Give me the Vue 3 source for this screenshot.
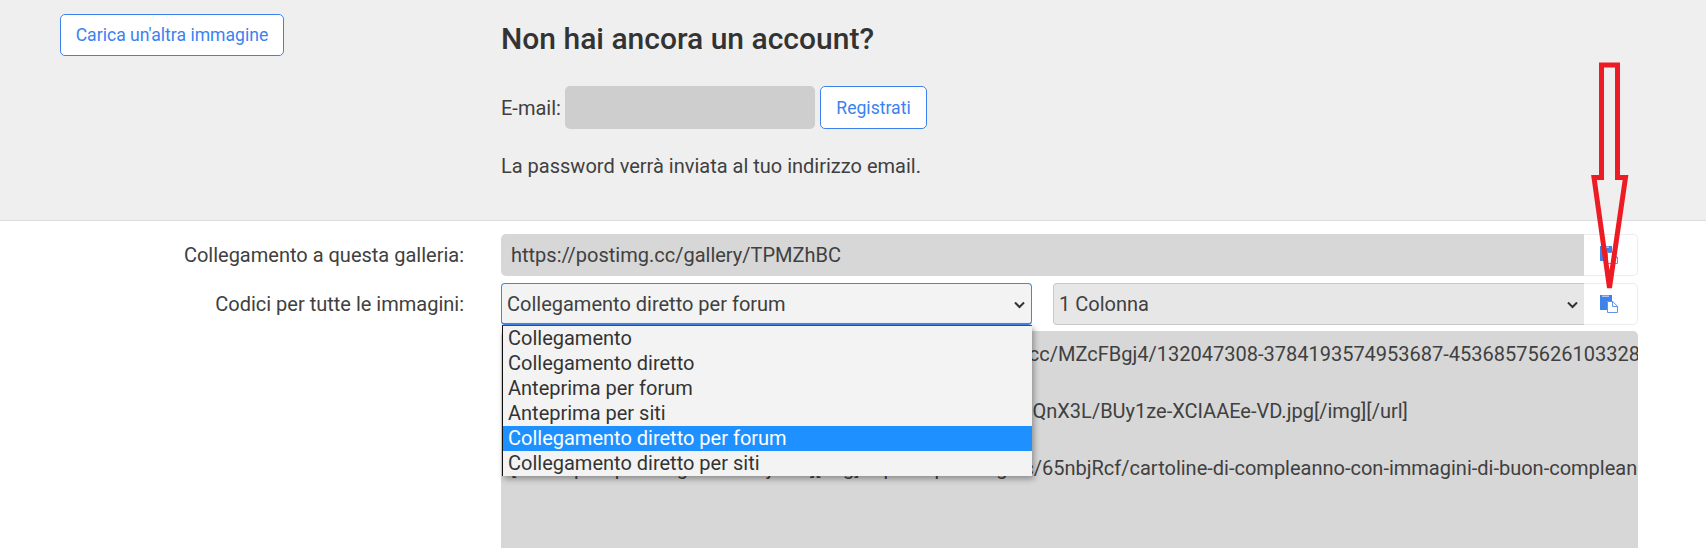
<template>
  <div class="page">
    <section class="top-panel">
      <div class="top-left">
        <button class="btn" type="button">Carica un'altra immagine</button>
      </div>
      <div class="signup">
        <h2>Non hai ancora un account?</h2>
        <form class="signup-row" @submit.prevent>
          <label for="email">E-mail:</label>
          <input id="email" class="email-input" type="text" />
          <button class="btn btn-small" type="button">Registrati</button>
        </form>
        <p>La password verrà inviata al tuo indirizzo email.</p>
      </div>
    </section>

    <section class="codes">
      <label class="row-label">Collegamento a questa galleria:</label>
      <div class="group">
        <input class="link-input" type="text" readonly value="https://postimg.cc/gallery/TPMZhBC" />
        <button class="copy-btn" type="button" aria-label="Copia">
          <svg width="18" height="18" viewBox="0 0 18 18">
            <path d="M0 0h12v6.5H7V15H0z" fill="#3f83ea" />
            <path d="M2 1.2h7" stroke="#dbe7fb" stroke-width="1" />
            <path d="M7.5 6.5h5.2l4.8 4.8v6.2H7.5z" fill="#fff" stroke="#5b95ee" />
            <path d="M12.5 6.5v5h5" fill="none" stroke="#5b95ee" />
          </svg>
        </button>
      </div>

      <label class="row-label">Codici per tutte le immagini:</label>
      <div class="group">
        <div class="select-box select-type">
          <span>{{ options[4] }}</span>
          <svg class="chevron" width="11" height="8" viewBox="0 0 11 8">
            <path d="M1 1.5l4.5 4.5 4.5-4.5" fill="none" stroke="#333" stroke-width="2" />
          </svg>
          <ul class="dropdown">
            <li v-for="(opt, i) in options" :key="opt" :class="{ selected: i === 4 }">{{ opt }}</li>
          </ul>
        </div>
        <div class="select-box select-cols">
          <span>1 Colonna</span>
          <svg class="chevron" width="11" height="8" viewBox="0 0 11 8">
            <path d="M1 1.5l4.5 4.5 4.5-4.5" fill="none" stroke="#333" stroke-width="2" />
          </svg>
        </div>
        <button class="copy-btn" type="button" aria-label="Copia">
          <svg width="18" height="18" viewBox="0 0 18 18">
            <path d="M0 0h12v6.5H7V15H0z" fill="#3f83ea" />
            <path d="M2 1.2h7" stroke="#dbe7fb" stroke-width="1" />
            <path d="M7.5 6.5h5.2l4.8 4.8v6.2H7.5z" fill="#fff" stroke="#5b95ee" />
            <path d="M12.5 6.5v5h5" fill="none" stroke="#5b95ee" />
          </svg>
        </button>
      </div>

      <div></div>
      <textarea class="code-area" wrap="off" readonly :value="code"></textarea>
    </section>

    <!-- hand drawn arrow on top of the screenshot -->
    <svg class="arrow" width="50" height="244" viewBox="0 0 50 244">
      <path
        d="M16.5 10h16v112.5h8L24.5 233 9 122.5h7.5z"
        fill="none"
        stroke="#ed1c24"
        stroke-width="5"
      />
    </svg>
  </div>
</template>

<script setup>
const options = [
  'Collegamento',
  'Collegamento diretto',
  'Anteprima per forum',
  'Anteprima per siti',
  'Collegamento diretto per forum',
  'Collegamento diretto per siti',
];

const code = [
  '[url=https://postimg.cc/iMZcFBgj4/][img]https://i.postimg.cc/MZcFBgj4/132047308-3784193574953687-4536857562610332830-n.jpg[/img][/url]',
  '',
  '[url=https://postimg.cc/QnX3L/][img]https://i.postimg.cc/cQnX3L/BUy1ze-XCIAAEe-VD.jpg[/img][/url]',
  '',
  '[url=https://postimg.cc/65nbjRcf/][img]https://i.postimg.cc/65nbjRcf/cartoline-di-compleanno-con-immagini-di-buon-compleanno.jpg[/img][/url]',
].join('\n');
</script>

<style>
html,
body {
  margin: 0;
  background: #fff;
}
</style>

<style scoped>
.page {
  position: relative;
  height: 548px;
  overflow: hidden;
  font-family: Roboto, "Liberation Sans", sans-serif;
  font-size: 20px;
  color: #404040;
}

.top-panel {
  display: grid;
  grid-template-columns: 501px 1fr;
  height: 220px;
  background: #efefef;
  border-bottom: 1px solid #dcdcdc;
}

.top-left {
  padding: 14px 0 0 60px;
}

.btn {
  height: 42px;
  width: 224px;
  padding: 0;
  font: inherit;
  font-size: 17.6px;
  color: #3b82f0;
  background: #fff;
  border: 1px solid #3b82f0;
  border-radius: 5px;
}

.btn-small {
  width: 107px;
  height: 43px;
}

.signup h2 {
  margin: 0;
  padding-top: 21px;
  font-size: 30px;
  line-height: 35px;
  font-weight: 500;
  color: #333;
}

.signup-row {
  display: flex;
  align-items: center;
  margin-top: 30px;
}

.signup-row label {
  width: 64px;
}

.email-input {
  width: 250px;
  height: 43px;
  box-sizing: border-box;
  margin-right: 5px;
  border: 0;
  border-radius: 5px;
  background: #cecece;
}

.signup p {
  margin: 26px 0 0;
  line-height: 22px;
}

.codes {
  display: grid;
  grid-template-columns: 464px 1137px;
  column-gap: 37px;
  row-gap: 7px;
  padding-top: 13px;
}

.row-label {
  height: 42px;
  line-height: 42px;
  text-align: right;
}

.group {
  display: flex;
  height: 42px;
}

.link-input {
  flex: 1;
  min-width: 0;
  box-sizing: border-box;
  padding: 0 10px;
  font: inherit;
  color: #404040;
  background: #d7d7d7;
  border: 0;
  border-radius: 5px 0 0 5px;
  outline: none;
}

.copy-btn {
  display: flex;
  align-items: center;
  justify-content: center;
  width: 54px;
  padding: 0 4px 0 0;
  background: #fff;
  border: 1px solid #ececec;
  border-left: 0;
  border-radius: 0 5px 5px 0;
}

.select-box {
  position: relative;
  box-sizing: border-box;
  display: flex;
  align-items: center;
  height: 42px;
  padding-left: 5px;
}

.chevron {
  position: absolute;
  right: 6px;
  top: 17px;
}

.select-type {
  width: 531px;
  margin-right: 21px;
  background: #f3f3f3;
  border: 1px solid #4285e8;
  border-bottom-width: 2px;
  border-radius: 4px;
}

.select-cols {
  flex: 1;
  background: #e7e7e7;
  border: 1px solid #c9c9c9;
  border-right: 0;
  border-radius: 4px 0 0 4px;
}

.dropdown {
  position: absolute;
  z-index: 2;
  left: 0;
  top: 41px;
  box-sizing: border-box;
  width: 530px;
  margin: 0;
  padding: 0;
  list-style: none;
  background: #f3f3f3;
  border-top: 1px solid #4a4a4a;
  border-left: 1px solid #111;
  box-shadow: 2px 3px 6px rgba(0, 0, 0, 0.35);
}

.dropdown li {
  height: 25px;
  padding-left: 5px;
  line-height: 25px;
  color: #333;
}

.dropdown li.selected {
  color: #fff;
  background: #1e90ff;
}

.code-area {
  display: block;
  box-sizing: border-box;
  width: 100%;
  height: 240px;
  margin-top: -1px;
  padding: 9px 10px;
  font: inherit;
  line-height: 28.5px;
  color: #404040;
  background: #d7d7d7;
  border: 0;
  border-radius: 5px;
  outline: none;
  resize: none;
  overflow: hidden;
}

.arrow {
  position: absolute;
  left: 1585px;
  top: 55px;
  z-index: 3;
}
</style>
